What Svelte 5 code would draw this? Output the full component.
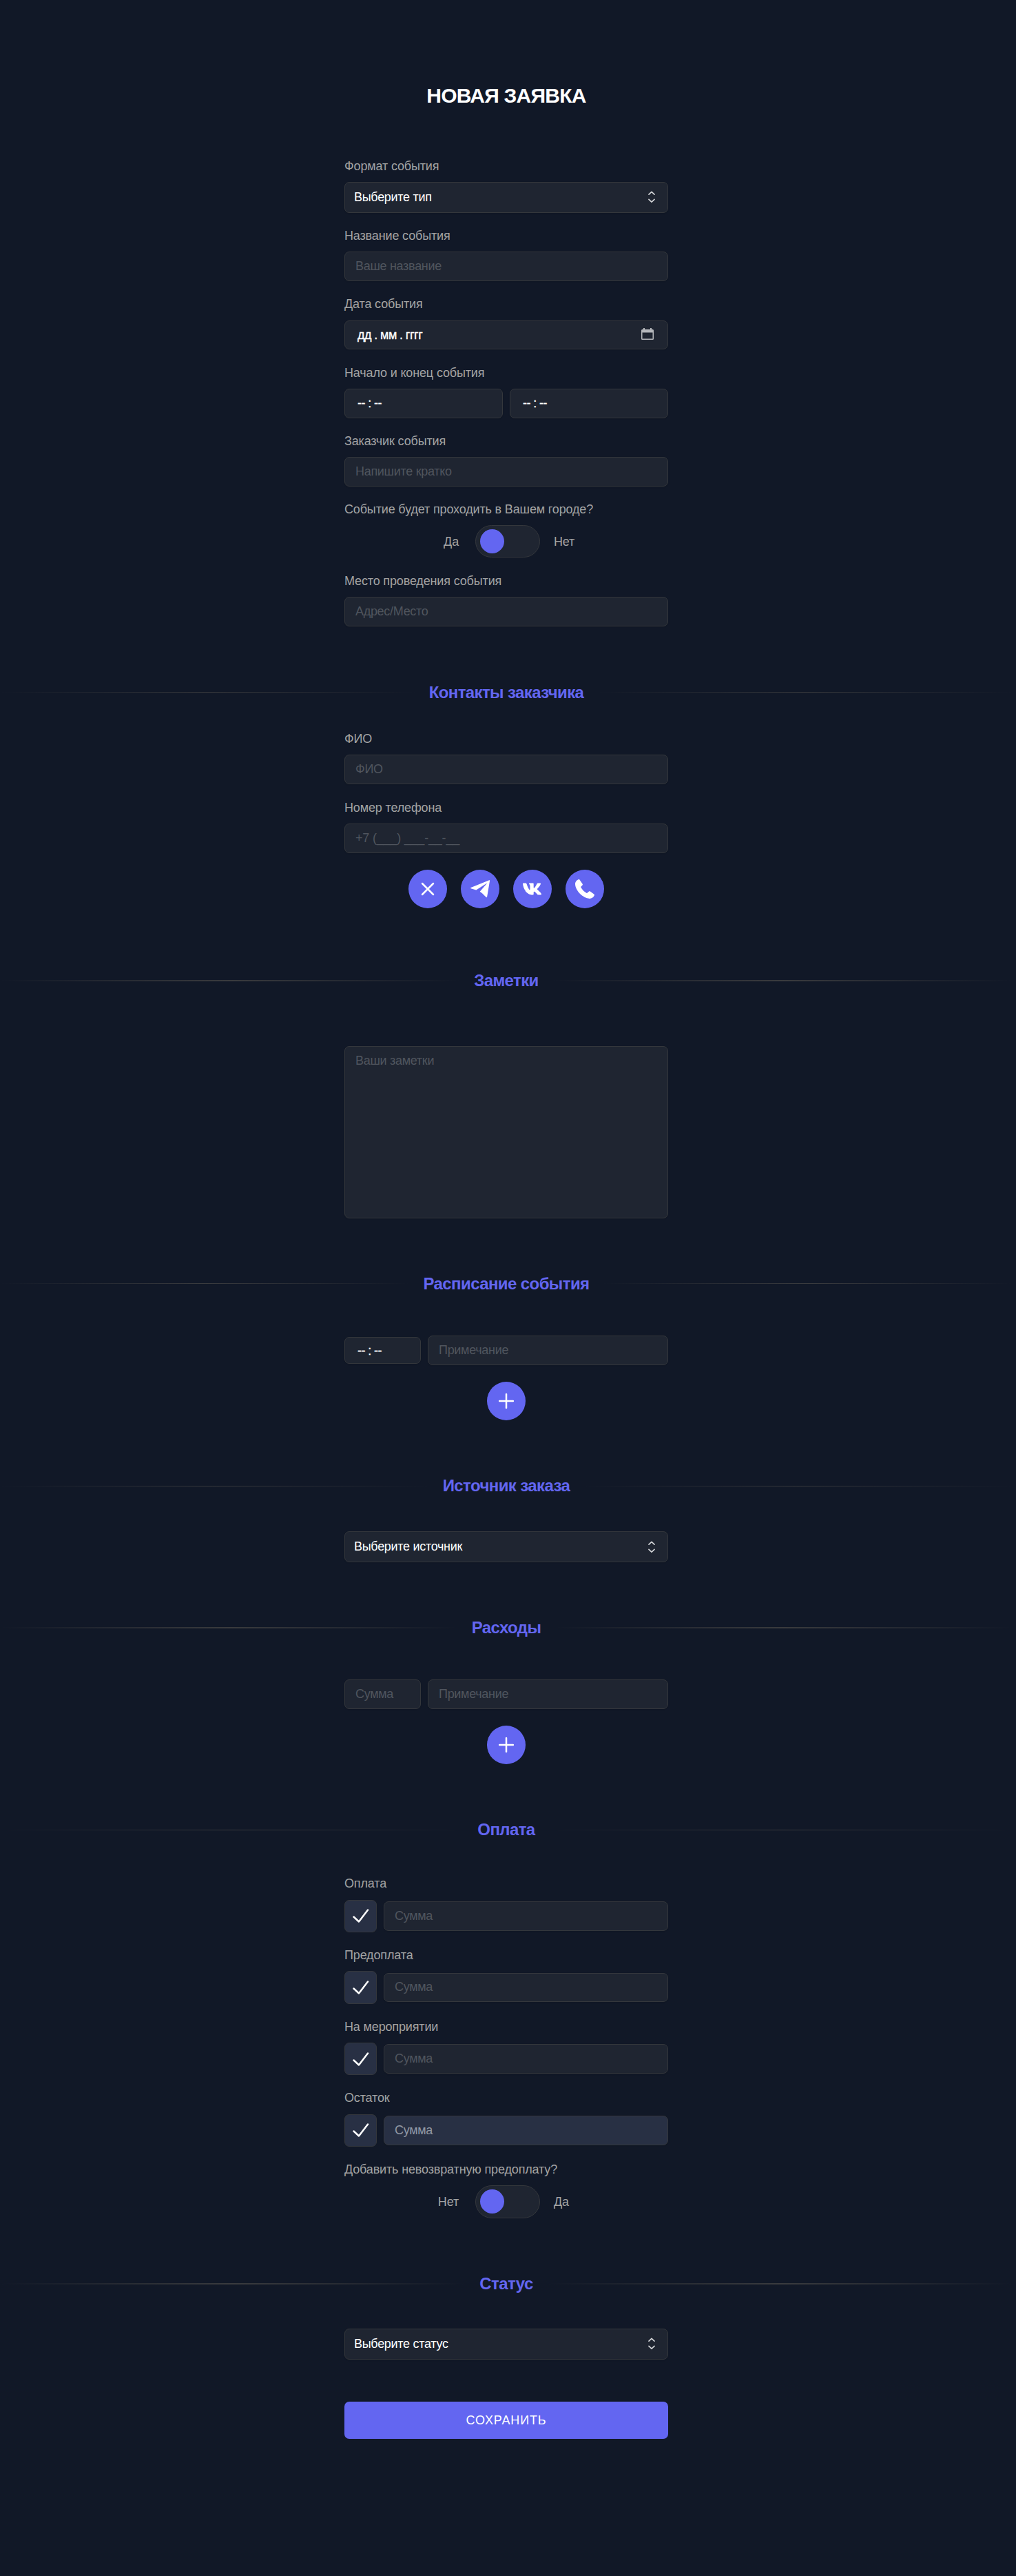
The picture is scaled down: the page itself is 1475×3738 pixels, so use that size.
<script>
  const payments = [
    { label: 'Оплата' },
    { label: 'Предоплата' },
    { label: 'На мероприятии' },
    { label: 'Остаток', locked: true }
  ];
</script>

{#snippet heading(text, thick)}
  <div class="heading" class:thick><i></i><h2>{text}</h2><i></i></div>
{/snippet}

{#snippet select(text)}
  <div class="box select">
    <span>{text}</span>
    <svg width="10" height="18" viewBox="0 0 10 18"><path d="M1 5.2 5 1.400l4 3.800M1 12.400l4 3.800 4-3.800" /></svg>
  </div>
{/snippet}

{#snippet time()}
  <span class="seg">--</span><span class="colon">:</span><span class="seg">--</span>
{/snippet}

{#snippet toggle(left, right)}
  <div class="toggle-row">
    <span class="left">{left}</span>
    <div class="toggle"><b></b></div>
    <span class="right">{right}</span>
  </div>
{/snippet}

{#snippet plus()}
  <div class="circles">
    <button class="circle" aria-label="Добавить"><svg width="22" height="22" viewBox="0 0 22 22"><path class="stroke" d="M11 1v20M1 11h20" /></svg></button>
  </div>
{/snippet}

<main>
  <h1>НОВАЯ ЗАЯВКА</h1>

  <section class="column">
    <div class="label">Формат события</div>
    {@render select('Выберите тип')}
    <div class="label">Название события</div>
    <input class="box" placeholder="Ваше название" />
    <div class="label">Дата события</div>
    <div class="box date">
      <span>дд</span><span>.</span><span>мм</span><span>.</span><span>гггг</span>
      <svg width="18" height="17" viewBox="0 0 18 17"><path d="M3 0h2v2h8V0h2v2h1.500a1.500 1.500 0 0 1 1.500 1.500V15.500a1.500 1.500 0 0 1-1.500 1.500H1.500A1.500 1.500 0 0 1 0 15.500V3.500A1.500 1.500 0 0 1 1.500 2H3zM1.500 6.500v9h15v-9z" fill-rule="evenodd" /></svg>
    </div>
    <div class="label">Начало и конец события</div>
    <div class="pair">
      <div class="box time">{@render time()}</div>
      <div class="box time">{@render time()}</div>
    </div>
    <div class="label">Заказчик события</div>
    <input class="box" placeholder="Напишите кратко" />
    <div class="label">Событие будет проходить в Вашем городе?</div>
    {@render toggle('Да', 'Нет')}
    <div class="label">Место проведения события</div>
    <input class="box" placeholder="Адрес/Место" />
  </section>

  <section class="contacts">
    {@render heading('Контакты заказчика')}
    <div class="column">
      <div class="label">ФИО</div>
      <input class="box" placeholder="ФИО" />
      <div class="label phone-label">Номер телефона</div>
      <input class="box phone" placeholder="+7 (___) ___-__-__" />
      <div class="circles">
        <button class="circle" aria-label="Очистить"><svg width="20" height="20" viewBox="0 0 20 20"><path class="stroke" d="M2 2l16 16M18 2 2 18" /></svg></button>
        <button class="circle" aria-label="Telegram"><svg width="28" height="26" viewBox="0 0 28 26"><path d="M27.200.3c.6-.3 1 .1.900.7l-4 23.400c-.2.900-.9 1-1.500.4l-5.300-5.200-3.600-2.900L23.600 5.300c.4-.4.1-.7-.4-.4L8.300 14.600.6 12.200c-.8-.3-.8-.9 0-1.200z" /></svg></button>
        <button class="circle" aria-label="VK"><svg width="28" height="18" viewBox="0 0 28 18"><path d="M0 1.300C0 .6.4.4 1 .4h3c.9 0 1.200.4 1.500 1.200.9 2.700 2.500 6.900 3.900 8.300.7.600 1.100.3 1.100-.9V5c0-1.400-.5-2.200-1.200-2.900-.7-.8-.3-1.600.6-1.600h4.800c.7 0 1 .4 1 1.200v5.400c0 .8.500.9 1 .4 1.800-1.700 3-4.300 3.900-6.200.3-.6.700-.9 1.400-.9h3c1 0 1.400.5 1 1.400-.9 2.300-2.900 4.700-4.600 6.500-.6.600-.6 1.100 0 1.700 1.800 1.700 4.600 4.200 5.500 5.900.5.900.1 1.500-.9 1.500h-3.300c-.9 0-1.300-.3-1.900-.9-1-1-2.500-2.700-3.600-3.400-.9-.6-1.500-.3-1.500.8v2c0 1-.3 1.500-1.500 1.500C5.200 17.400.500 8.300 0 1.300z" /></svg></button>
        <button class="circle" aria-label="Позвонить"><svg width="28" height="28" viewBox="0 0 28 28"><path d="M4.600.2C5.200-.1 6-.1 6.400.5l4.300 6.200c.4.600.3 1.300-.2 1.800L8.600 10.600c-.4.500-.3.900 0 1.400 1.800 3.300 4.600 6.100 7.800 7.700.5.300 1 .3 1.400-.1l2.300-2c.5-.5 1.100-.5 1.700-.1l5.500 4.100c.7.5.8 1.200.4 1.900-1.600 3-4 4.600-7 4.400C11.200 27.200.3 16.600 0 6.800-.1 3.800 1.800 1.500 4.600.2z" /></svg></button>
      </div>
    </div>
  </section>

  <section class="notes">
    {@render heading('Заметки', true)}
    <div class="column"><textarea class="box" placeholder="Ваши заметки"></textarea></div>
  </section>

  <section class="schedule">
    {@render heading('Расписание события')}
    <div class="column">
      <div class="entry"><div class="box time short">{@render time()}</div><input class="box" placeholder="Примечание" /></div>
      {@render plus()}
    </div>
  </section>

  <section class="source">
    {@render heading('Источник заказа')}
    <div class="column">{@render select('Выберите источник')}</div>
  </section>

  <section class="costs">
    {@render heading('Расходы', true)}
    <div class="column">
      <div class="entry"><input class="box" placeholder="Сумма" /><input class="box" placeholder="Примечание" /></div>
      {@render plus()}
    </div>
  </section>

  <section class="payment">
    {@render heading('Оплата')}
    <div class="column">
      {#each payments as p}
        <div class="label">{p.label}</div>
        <div class="pay">
          <div class="check"><svg width="24" height="20" viewBox="0 0 24 20"><path class="stroke" d="M1.500 11.500 9 18.500 22 1.500" /></svg></div>
          <input class="box" class:locked={p.locked} placeholder="Сумма" />
        </div>
      {/each}
      <div class="label">Добавить невозвратную предоплату?</div>
      {@render toggle('Нет', 'Да')}
    </div>
  </section>

  <section class="status">
    {@render heading('Статус', true)}
    <div class="column">
      {@render select('Выберите статус')}
      <button class="save">СОХРАНИТЬ</button>
    </div>
  </section>
</main>

<style>
  :global(body) { background: #111827; }
  main {
    box-sizing: border-box;
    height: 3738px;
    padding: 1px 5px 0 0;
    background: #111827;
    color: #fff;
    font: 18px/24px "Liberation Sans", Arial, sans-serif;
    letter-spacing: -0.3px;
  }
  main * { box-sizing: border-box; }
  h1 {
    margin: 120px 0 0;
    font-size: 30px;
    line-height: 36px;
    font-weight: 700;
    letter-spacing: -0.75px;
    text-align: center;
  }
  .column { width: 470px; margin: 0 auto; }
  h1 + .column { padding-top: 50.600px; }
  .label {
    height: 56.400px;
    padding-top: 21.200px;
    color: #a3a3a3;
    white-space: nowrap;
    letter-spacing: -0.15px;
  }
  .phone-label { height: 57.100px; padding-top: 22px; }
  .box {
    display: block;
    width: 100%;
    height: 42.800px;
    margin: 0;
    padding: 0 15px;
    border: 1px solid #34373c;
    border-radius: 7px;
    outline: 0;
    background: #1f2531;
    box-shadow: 0 1px 2px rgb(0 0 0 / 10%);
    color: #fff;
    font: inherit;
    letter-spacing: inherit;
  }
  .box::placeholder { color: #50555e; opacity: 1; }
  .box.phone { letter-spacing: -0.200px; }
  .box.locked { background: #283044; }
  .box.locked::placeholder { color: #9299a5; }
  .select { display: flex; align-items: center; justify-content: space-between; height: 45px; padding: 0 18px 1px 13px; }
  .select svg { margin-top: 1px; fill: none; stroke: #d4d6d9; stroke-width: 1.600; stroke-linecap: round; stroke-linejoin: round; }
  .date, .time { display: flex; align-items: center; gap: 4.200px; padding: 0 20px 0 18px; letter-spacing: -0.450px; -webkit-text-stroke: 0.300px #fff; }
  .date svg { margin: -3px 0 0 auto; fill: #b5b7bb; }
  .pair { display: grid; grid-template-columns: 1fr 1fr; gap: 10px; }
  .toggle-row { display: grid; grid-template-columns: 166px 94px 1fr; column-gap: 24px; align-items: center; height: 47.300px; color: #a3a3a3; letter-spacing: -0.15px; }
  .toggle-row .left { text-align: right; }
  .toggle-row .right { margin-left: -4px; }
  .toggle { height: 47.300px; padding: 5px 6px; border: 1px solid #34373c; border-radius: 24px; background: #1f2531; }
  .toggle b { display: block; width: 35px; height: 35px; border-radius: 50%; background: #6366f1; }
  .heading { display: grid; grid-template-columns: 1fr auto 1fr; gap: 20px; align-items: center; height: 32px; }
  .heading i { height: 1px; background: linear-gradient(90deg, transparent, #3a3b3e, transparent); }
  .heading.thick i { height: 2px; }
  h2 { margin: 0; color: #6366f1; font-size: 24px; line-height: 32px; font-weight: 700; letter-spacing: -0.6px; }
  .circles { display: flex; justify-content: center; gap: 19.700px; padding-top: 24px; }
  .circle { display: flex; align-items: center; justify-content: center; width: 56.400px; height: 56.400px; padding: 0; border: 0; border-radius: 50%; background: #6366f1; }
  .circle svg { fill: #fff; }
  .stroke { fill: none; stroke: #fff; stroke-width: 2.500; stroke-linecap: round; stroke-linejoin: round; }
  .contacts { padding-top: 80px; }
  .contacts .heading { margin-bottom: 18px; }
  .notes { padding-top: 88.800px; }
  .notes .heading { margin-bottom: 79px; }
  textarea.box { height: 250px; padding: 8px 15px; resize: none; }
  .schedule { padding-top: 79px; }
  .schedule .heading { margin-bottom: 59px; }
  .entry { display: grid; grid-template-columns: 111px 1fr; gap: 10px; align-items: center; }
  .time.short { height: 39px; padding-top: 2px; }
  .source { padding-top: 79.300px; }
  .source .heading { margin-bottom: 49.700px; }
  .costs { padding-top: 79px; }
  .costs .heading { margin-bottom: 59px; }
  .payment { padding-top: 79px; }
  .payment .heading { margin-bottom: 29px; }
  .pay { display: grid; grid-template-columns: 47px 1fr; gap: 10px; align-items: center; }
  .check { display: flex; align-items: center; justify-content: center; height: 47.300px; border: 1px solid #34373c; border-radius: 7px; background: #283044; }
  .status { padding-top: 79px; }
  .status .heading { margin-bottom: 49.200px; }
  .save { display: block; width: 100%; height: 54px; margin-top: 61px; padding: 0; border: 0; border-radius: 7px; background: #6366f1; color: #fff; font: inherit; letter-spacing: 0.850px; }
</style>
